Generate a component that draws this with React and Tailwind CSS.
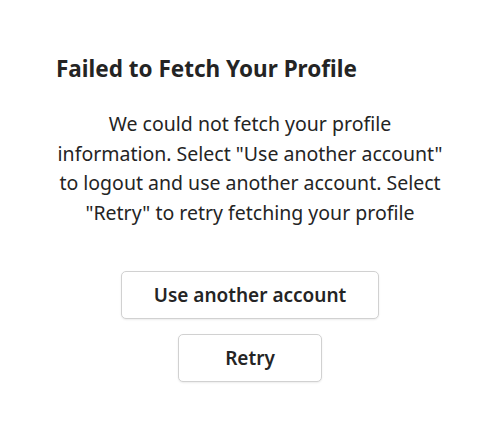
export default function App() {
  return (
    <div className="w-[487px] h-[438px] bg-white text-[#242424]" style={{ fontFamily: '"Noto Sans", "Open Sans", sans-serif' }}>
      <div className="pt-[54px] pl-[56px] w-[444px]">
        <h1 className="text-[22.5px] leading-[30px] font-bold">Failed to Fetch Your Profile</h1>
        <p className="mt-[25px] text-center text-[19.5px] leading-[29.5px] whitespace-nowrap">
          We could not fetch your profile
          <br />
          information. Select "Use another account"
          <br />
          to logout and use another account. Select
          <br />
          "Retry" to retry fetching your profile
        </p>
        <div className="mt-[44px] flex flex-col items-center gap-[15px]">
          <button className="w-[258px] h-[48px] rounded-[5px] border border-[#d1d1d1] bg-white shadow-[0_1px_2px_rgba(0,0,0,0.08)] text-[19px] font-semibold">
            Use another account
          </button>
          <button className="w-[144px] h-[48px] rounded-[5px] border border-[#d1d1d1] bg-white shadow-[0_1px_2px_rgba(0,0,0,0.08)] text-[19px] font-semibold">
            Retry
          </button>
        </div>
      </div>
    </div>
  );
}
